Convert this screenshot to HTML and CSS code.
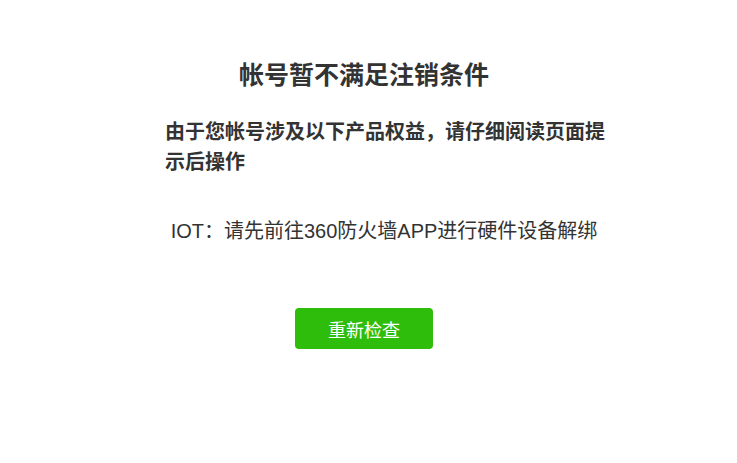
FILE: index.html
```html
<!DOCTYPE html>
<html lang="zh">
<head>
<meta charset="utf-8">
<link rel="stylesheet" href="styles.css">
</head>
<body>
<main class="page">
  <h1 class="title">帐号暂不满足注销条件</h1>
  <p class="desc">由于您帐号涉及以下产品权益，请仔细阅读页面提示后操作</p>
  <p class="item">IOT：请先前往360防火墙APP进行硬件设备解绑</p>
  <div class="actions"><button class="btn">重新检查</button></div>
</main>
</body>
</html>
```

FILE: styles.css
```css
html, body {
  margin: 0;
  padding: 0;
  background: #fff;
}
body {
  font-family: "Liberation Sans", "Noto Sans CJK SC", sans-serif;
  color: #333;
}
.page {
  width: 398px;
  margin-left: 165px;
  padding-top: 57px;
}
.title {
  margin: 0;
  text-align: center;
  font-size: 25px;
  line-height: 36px;
  font-weight: bold;
  color: #333;
}
.desc {
  margin: 24px 0 0;
  width: 450px;
  font-size: 20px;
  line-height: 30px;
  font-weight: bold;
  color: #333;
}
.item {
  margin: 39px 0 0;
  width: 438px;
  text-align: center;
  font-size: 20px;
  line-height: 30px;
  color: #333;
}
.actions {
  display: flex;
  justify-content: center;
  margin-top: 62px;
}
.btn {
  width: 138px;
  height: 41px;
  border: none;
  border-radius: 4px;
  background: #2fbd0b;
  color: #fff;
  font-family: "Liberation Sans", "Noto Sans CJK SC", sans-serif;
  font-size: 18px;
  padding: 0;
}
```
